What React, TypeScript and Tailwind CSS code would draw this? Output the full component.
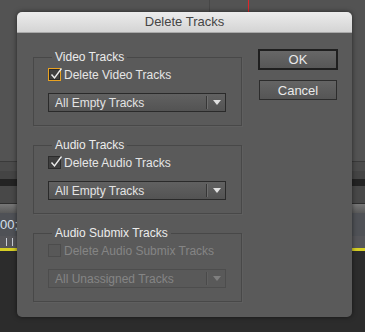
import React from "react";

function Check({ checked, disabled, focus }: { checked?: boolean; disabled?: boolean; focus?: boolean }) {
  return (
    <span
      className={
        "relative block w-[13px] h-[13px] shrink-0 border " +
        (disabled
          ? "border-[#4c4c4c] bg-[#585858]"
          : focus
          ? "border-[#e9a221] bg-[#404040] shadow-[inset_0_0_0_1px_#2a2a2a]"
          : "border-[#2c2c2c] bg-[#404040]")
      }
    >
      {checked ? (
        <svg className="absolute left-[1px] top-[-2px]" width="13" height="13" viewBox="0 0 13 13">
          <path d="M1.5 7.5 L4.5 11 L11.5 1.5" fill="none" stroke="#ededed" strokeWidth="1.4" />
        </svg>
      ) : null}
    </span>
  );
}

function Select({ label, disabled }: { label: string; disabled?: boolean }) {
  return (
    <div
      className={
        "flex items-center h-[19px] w-[178px] border " +
        (disabled
          ? "border-[#4d4d4d] bg-[#595959] text-[#858585]"
          : "border-[#2a2a2a] bg-gradient-to-b from-[#616161] to-[#535353] text-[#e4e4e4]")
      }
    >
      <span className="flex-1 pl-[6px] leading-none">{label}</span>
      <span className={"w-px h-[13px] " + (disabled ? "bg-[#4a4a4a]" : "bg-[#363636]")} />
      <span className={"w-px h-[13px] mr-[5px] " + (disabled ? "bg-[#606060]" : "bg-[#6e6e6e]")} />
      <svg width="8" height="6" viewBox="0 0 8 6" className="mr-[4px]">
        <path d="M0 0 L8 0 L4 5 Z" fill={disabled ? "#7f7f7f" : "#e0e0e0"} />
      </svg>
    </div>
  );
}

function Group({
  title,
  check,
  select,
  checked,
  disabled,
  focus,
}: {
  title: string;
  check: string;
  select: string;
  checked?: boolean;
  disabled?: boolean;
  focus?: boolean;
}) {
  return (
    <fieldset className="border border-[#484848] shadow-[1px_1px_0_#5f5f5f] px-[14px] pb-[13px] h-[76px]">
      <legend className="ml-[4px] px-[3px] text-[#ececec] leading-[14px]">{title}</legend>
      <div className="flex items-center gap-[3px] mt-[4px] h-[13px]">
        <Check checked={checked} disabled={disabled} focus={focus} />
        <span className={disabled ? "text-[#858585]" : "text-[#e6e6e6]"}>{check}</span>
      </div>
      <div className="mt-[12px]">
        <Select label={select} disabled={disabled} />
      </div>
    </fieldset>
  );
}

export default function App() {
  return (
    <div
      className="relative w-[365px] h-[332px] overflow-hidden text-[12px]"
      style={{ fontFamily: '"Liberation Sans", Arial, sans-serif' }}
    >
      {/* timeline panels behind the dialog */}
      <div className="flex flex-col h-full">
        <div className="flex h-[161px] bg-[#535353]">
          <div className="w-[209px]" />
          <div className="w-px h-[12px] bg-[#474747]" />
          <div className="w-[38px]" />
          <div className="w-px h-[12px] bg-[#e0262a]" />
        </div>
        <div className="h-px bg-[#3a3a3a]" />
        <div className="h-[9px] bg-[#4b4b4b]" />
        <div className="h-[8px] bg-[#444444]" />
        <div className="h-[7px] bg-[#232323]" />
        <div className="h-[17px] bg-[#484848]" />
        <div className="h-px bg-[#2e2e2e]" />
        <div className="h-[9px] bg-gradient-to-b from-[#777777] to-[#595959]" />
        <div className="h-[23px] bg-[#4f5156] text-[#d6e0ee] text-[13px] leading-[23px]">00;</div>
        <div className="flex items-end gap-[5px] h-[12px] bg-[#555559] pl-[6px] pb-[2px]">
          <span className="w-px h-[8px] bg-[#c8ccd4]" />
          <span className="w-px h-[8px] bg-[#c8ccd4]" />
          <span className="w-px h-[8px] bg-[#c8ccd4]" />
        </div>
        <div className="h-[3px] bg-[#d6cf25]" />
        <div className="flex-1 bg-[#2c2c2c]" />
      </div>

      {/* dialog */}
      <div className="absolute left-[17px] top-[12px] w-[335px] h-[305px] rounded-[5px] bg-[#5a5a5a] shadow-[0_0_5px_rgba(0,0,0,0.55)] overflow-hidden">
        <div className="h-[21px] bg-gradient-to-b from-[#ececec] to-[#d4d4d4] border-b border-[#a9a9a9] flex items-center justify-center text-[13px] text-[#454545]">
          Delete Tracks
        </div>
        <div className="flex pl-[16px] pt-[17px] gap-[16px]">
          <div className="flex flex-col gap-[12px] w-[209px]">
            <Group title="Video Tracks" check="Delete Video Tracks" select="All Empty Tracks" checked focus />
            <Group title="Audio Tracks" check="Delete Audio Tracks" select="All Empty Tracks" checked />
            <Group
              title="Audio Submix Tracks"
              check="Delete Audio Submix Tracks"
              select="All Unassigned Tracks"
              disabled
            />
          </div>
          <div className="flex flex-col items-center w-[80px] -mt-px gap-[10px]">
            <button className="w-[80px] h-[21px] border-2 border-[#1f1f1f] bg-gradient-to-b from-[#676767] to-[#575757] text-[#eaeaea] text-[13px] leading-none">
              OK
            </button>
            <button className="w-[78px] h-[20px] border border-[#2c2c2c] bg-gradient-to-b from-[#646464] to-[#555555] text-[#eaeaea] text-[13px] leading-none">
              Cancel
            </button>
          </div>
        </div>
      </div>
    </div>
  );
}
